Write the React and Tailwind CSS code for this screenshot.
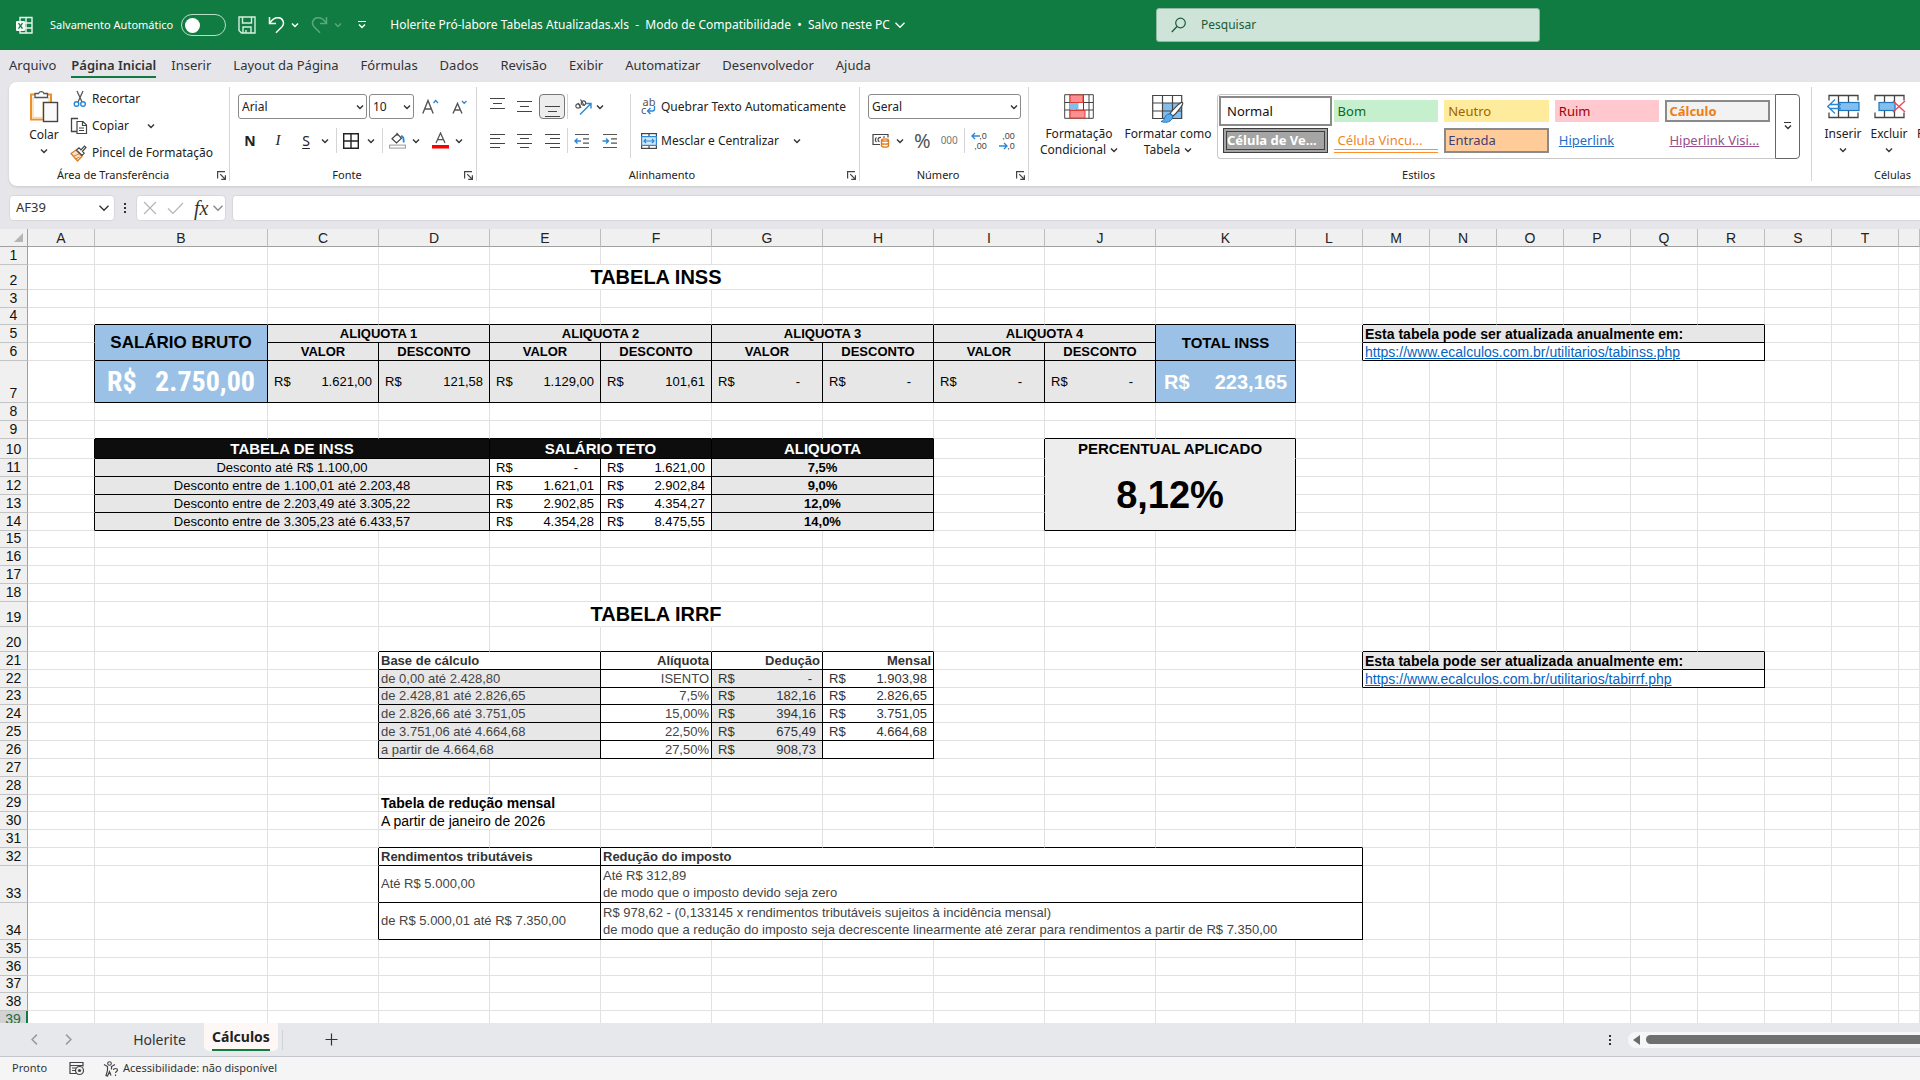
import { useState } from 'react';
import clsx from 'clsx';

const MENU_TABS = [
  'Arquivo',
  'Página Inicial',
  'Inserir',
  'Layout da Página',
  'Fórmulas',
  'Dados',
  'Revisão',
  'Exibir',
  'Automatizar',
  'Desenvolvedor',
  'Ajuda',
];

const COLUMNS = [
  { id: 'A', width: 'w-[67px]' },
  { id: 'B', width: 'w-[173px]' },
  { id: 'C', width: 'w-[111px]' },
  { id: 'D', width: 'w-[111px]' },
  { id: 'E', width: 'w-[111px]' },
  { id: 'F', width: 'w-[111px]' },
  { id: 'G', width: 'w-[111px]' },
  { id: 'H', width: 'w-[111px]' },
  { id: 'I', width: 'w-[111px]' },
  { id: 'J', width: 'w-[111px]' },
  { id: 'K', width: 'w-[140px]' },
  { id: 'L', width: 'w-[67px]' },
  { id: 'M', width: 'w-[67px]' },
  { id: 'N', width: 'w-[67px]' },
  { id: 'O', width: 'w-[67px]' },
  { id: 'P', width: 'w-[67px]' },
  { id: 'Q', width: 'w-[67px]' },
  { id: 'R', width: 'w-[67px]' },
  { id: 'S', width: 'w-[67px]' },
  { id: 'T', width: 'w-[67px]' },
  { id: '', width: '' },
];

const ROW_COUNT = 39;
const ACTIVE_ROW = 39;

// rows that differ from the default 18px height
const ROW_HEIGHTS = {
  2: 'h-[25px]',
  4: 'h-[17px]',
  7: 'h-[42px]',
  10: 'h-[20px]',
  15: 'h-[17px]',
  19: 'h-[25px]',
  20: 'h-[25px]',
  23: 'h-[17px]',
  29: 'h-[17px]',
  33: 'h-[37px]',
  34: 'h-[37px]',
  37: 'h-[17px]',
};

const GRAY = 'bg-[#e7e7e7]';
const BLUE = 'bg-[#9bc2e6]';
const BLACK = 'bg-[#0d0d0d] text-white font-bold text-[15px] text-center';
const HEAD = `${GRAY} font-bold text-center`;
const TITLE = 'text-[20px] leading-6 font-bold';

const money = (value, style = GRAY, dash = 'mr-4') => ({ money: value, style, dash });

// cell address -> content; w/h are merged columns/rows
const CELLS = {
  F2: { text: 'TABELA INSS', style: TITLE, overflow: true, center: true },

  B5: { text: 'SALÁRIO BRUTO', h: 2, box: true, style: `${BLUE} text-[17px] font-bold text-center` },
  C5: { text: 'ALIQUOTA 1', w: 2, box: true, style: HEAD },
  E5: { text: 'ALIQUOTA 2', w: 2, box: true, style: HEAD },
  G5: { text: 'ALIQUOTA 3', w: 2, box: true, style: HEAD },
  I5: { text: 'ALIQUOTA 4', w: 2, box: true, style: HEAD },
  K5: { text: 'TOTAL INSS', h: 2, box: true, style: `${BLUE} text-[15px] font-bold text-center` },
  C6: { text: 'VALOR', box: true, style: HEAD },
  D6: { text: 'DESCONTO', box: true, style: HEAD },
  E6: { text: 'VALOR', box: true, style: HEAD },
  F6: { text: 'DESCONTO', box: true, style: HEAD },
  G6: { text: 'VALOR', box: true, style: HEAD },
  H6: { text: 'DESCONTO', box: true, style: HEAD },
  I6: { text: 'VALOR', box: true, style: HEAD },
  J6: { text: 'DESCONTO', box: true, style: HEAD },
  B7: {
    money: '2.750,00',
    pad: 'px-3',
    style: `${BLUE} text-white font-bold text-[28px] leading-9 font-['Liberation_Sans_Narrow','Roboto_Condensed',sans-serif]`,
  },
  C7: money('1.621,00'),
  D7: money('121,58'),
  E7: money('1.129,00'),
  F7: money('101,61'),
  G7: money('-'),
  H7: money('-'),
  I7: money('-'),
  J7: money('-'),
  K7: { money: '223,165', pad: 'px-2', style: `${BLUE} text-white font-bold text-[20px] leading-6` },

  B10: { text: 'TABELA DE INSS', w: 3, box: true, style: BLACK },
  E10: { text: 'SALÁRIO TETO', w: 2, box: true, style: BLACK },
  G10: { text: 'ALIQUOTA', w: 2, box: true, style: BLACK },
  B11: { text: 'Desconto até R$ 1.100,00', w: 3, box: true, style: `${GRAY} text-center` },
  B12: { text: 'Desconto entre de 1.100,01 até 2.203,48', w: 3, box: true, style: `${GRAY} text-center` },
  B13: { text: 'Desconto entre de 2.203,49 até 3.305,22', w: 3, box: true, style: `${GRAY} text-center` },
  B14: { text: 'Desconto entre de 3.305,23 até 6.433,57', w: 3, box: true, style: `${GRAY} text-center` },
  E11: money('-', ''),
  E12: money('1.621,01', ''),
  E13: money('2.902,85', ''),
  E14: money('4.354,28', ''),
  F11: money('1.621,00', ''),
  F12: money('2.902,84', ''),
  F13: money('4.354,27', ''),
  F14: money('8.475,55', ''),
  G11: { text: '7,5%', w: 2, box: true, style: HEAD },
  G12: { text: '9,0%', w: 2, box: true, style: HEAD },
  G13: { text: '12,0%', w: 2, box: true, style: HEAD },
  G14: { text: '14,0%', w: 2, box: true, style: HEAD },
  J10: { text: 'PERCENTUAL APLICADO', w: 2, box: true, open: true, style: 'bg-[#ededed] text-[15px] font-bold text-center' },
  J11: { text: '8,12%', w: 2, h: 4, box: true, style: 'bg-[#ededed] text-[38px] leading-10 font-bold text-center' },

  F19: { text: 'TABELA IRRF', style: TITLE, overflow: true, center: true },
  D21: { text: 'Base de cálculo', w: 2, box: true, style: 'font-bold text-[#333]' },
  F21: { text: 'Alíquota', box: true, style: 'font-bold text-[#333] text-right' },
  G21: { text: 'Dedução', box: true, style: 'font-bold text-[#333] text-right' },
  H21: { text: 'Mensal', box: true, style: 'font-bold text-[#333] text-right' },
  D29: { text: 'Tabela de redução mensal', overflow: true, style: 'font-bold text-[14px]' },
  D30: { text: 'A partir de janeiro de 2026', overflow: true, style: 'text-[14px]' },
  D32: { text: 'Rendimentos tributáveis', w: 2, box: true, style: 'font-bold text-[#333]' },
  F32: { text: 'Redução do imposto', w: 7, box: true, style: 'font-bold text-[#333]' },
  D33: { text: 'Até R$ 5.000,00', w: 2, box: true, style: 'text-[#444]' },
  F33: {
    text: 'Até R$ 312,89\nde modo que o imposto devido seja zero',
    w: 7,
    box: true,
    style: 'text-[#444] leading-[17px]',
  },
  D34: { text: 'de R$ 5.000,01 até R$ 7.350,00', w: 2, box: true, style: 'text-[#444]' },
  F34: {
    text: 'R$ 978,62 - (0,133145 x rendimentos tributáveis sujeitos à incidência mensal)\nde modo que a redução do imposto seja decrescente linearmente até zerar para rendimentos a partir de R$ 7.350,00',
    w: 7,
    box: true,
    style: 'text-[#444] leading-[17px]',
  },

  M5: { text: 'Esta tabela pode ser atualizada anualmente em:', w: 6, box: true, style: `${GRAY} font-bold text-[14px]` },
  M6: { link: 'https://www.ecalculos.com.br/utilitarios/tabinss.php', w: 6, box: true, style: 'text-[14px]' },
  M21: { text: 'Esta tabela pode ser atualizada anualmente em:', w: 6, box: true, style: `${GRAY} font-bold text-[14px]` },
  M22: { link: 'https://www.ecalculos.com.br/utilitarios/tabirrf.php', w: 6, box: true, style: 'text-[14px]' },
};

const IRRF = [
  ['de 0,00 até 2.428,80', 'ISENTO', '-', '1.903,98'],
  ['de 2.428,81 até 2.826,65', '7,5%', '182,16', '2.826,65'],
  ['de 2.826,66 até 3.751,05', '15,00%', '394,16', '3.751,05'],
  ['de 3.751,06 até 4.664,68', '22,50%', '675,49', '4.664,68'],
  ['a partir de 4.664,68', '27,50%', '908,73', null],
];

IRRF.forEach(([base, rate, deduction, monthly], i) => {
  const row = 22 + i;
  CELLS[`D${row}`] = { text: base, w: 2, box: true, style: `${GRAY} text-[#444]` };
  CELLS[`F${row}`] = { text: rate, box: true, style: 'text-right text-[#444]' };
  CELLS[`G${row}`] = money(deduction, `${GRAY} text-[#333]`, 'mr-1');
  CELLS[`H${row}`] = monthly ? money(monthly, 'text-[#333]') : { text: '', box: true };
});

// Every grid position that a cell covers, so neighbours know which lines to darken
const COVER = {};
Object.entries(CELLS).forEach(([address, cell]) => {
  const col = COLUMNS.findIndex((c) => c.id === address[0]);
  const row = Number(address.slice(1));
  for (let r = row; r < row + (cell.h || 1); r++) {
    for (let c = col; c < col + (cell.w || 1); c++) {
      COVER[`${c}:${r}`] = { address, boxed: Boolean(cell.box || cell.money), center: cell.center };
    }
  }
});

const isBoxed = (col, row) => Boolean(COVER[`${col}:${row}`]?.boxed);

/* ---------- small icons ---------- */

function Svg({ w = 16, h = 16, children, className }) {
  return (
    <svg width={w} height={h} viewBox={`0 0 ${w} ${h}`} fill="none" className={clsx('shrink-0', className)} aria-hidden="true">
      {children}
    </svg>
  );
}

function Chevron({ size = 8, className = 'text-[#333]' }) {
  return (
    <svg width={size} height={size} viewBox="0 0 8 8" fill="none" className={clsx('shrink-0', className)} aria-hidden="true">
      <path d="M1 2.5 4 5.5 7 2.5" stroke="currentColor" strokeWidth={size > 8 ? 0.9 : 1.4} />
    </svg>
  );
}

function ExcelIcon() {
  return (
    <Svg w={18} h={20}>
      <path d="M4 6V2.5h12V18H4v-3M10 2.5V18M4 8h12M9 13h7" stroke="#e9f7ef" strokeWidth="1.4" />
      <rect x="0" y="6" width="9" height="10" rx="1" fill="#f2fbf6" />
      <path d="m2.5 8.2 4 5.4m0-5.4-4 5.4" stroke="#107c41" strokeWidth="1.3" />
    </Svg>
  );
}

function SaveIcon() {
  return (
    <Svg w={18} h={18}>
      <path d="M1 1h16v16H3.5L1 14.5zM4.5 1v6h9V1M5 17v-6h8v6M8 14v3" stroke="#d5f0e0" strokeWidth="1.4" />
    </Svg>
  );
}

function UndoIcon({ className }) {
  return (
    <Svg w={17} h={18} className={className}>
      <path d="M1.500 1v6.500H8M1.800 7.200C4 3.500 7 1.500 10.500 1.800c4.500.4 6.500 5.500 3.500 9L8 16.800" stroke="currentColor" strokeWidth="1.5" />
    </Svg>
  );
}

function PasteIcon() {
  return (
    <Svg w={30} h={33}>
      <path d="M7.500 4.500H2v25h12" stroke="#e8912d" strokeWidth="2" />
      <path d="M17 4.500h5v8" stroke="#e8912d" strokeWidth="2" />
      <path d="M4 7v20.500h10V12.500h6V7" stroke="#fbdca8" strokeWidth="1.5" />
      <path d="M6 7.500v-4h3.500a3 3 0 0 1 5.500 0h3.500v4z" fill="#fff" stroke="#555" strokeWidth="1.3" />
      <rect x="14.5" y="12.5" width="14" height="19" fill="#fafafa" stroke="#444" strokeWidth="1.4" />
    </Svg>
  );
}

function ScissorsIcon() {
  return (
    <Svg w={16} h={18}>
      <path d="M5 1l5 11M11 1 6 12" stroke="#555" strokeWidth="1.3" />
      <circle cx="4.500" cy="14" r="2.300" stroke="#2b88d8" strokeWidth="1.4" />
      <circle cx="11" cy="14" r="2.300" stroke="#2b88d8" strokeWidth="1.4" />
    </Svg>
  );
}

function CopyIcon() {
  return (
    <Svg w={18} h={18}>
      <path d="M7 14.500H1.500V1.500H8" stroke="#444" strokeWidth="1.3" />
      <path d="M7 4.500h6l3.500 3.500v8.500H7zM12.500 4.500V8.500h4M9 11h5M9 13.500h5" stroke="#444" strokeWidth="1.2" />
    </Svg>
  );
}

function BrushIcon() {
  return (
    <Svg w={18} h={17}>
      <path d="M1 8.500 6 5l6 6.500L7.500 16z" fill="#fce1c4" stroke="#d9822b" strokeWidth="1.3" />
      <path d="M3 11.500l6-2.500M5.500 14l4-2" stroke="#d9822b" strokeWidth="1" />
      <path d="M6.500 5 9 2.800l2 2L14.500 1 16 2.500l-3.500 3.800 1.700 2L12 10.500z" fill="#fff" stroke="#444" strokeWidth="1.2" />
    </Svg>
  );
}

function LauncherIcon() {
  return (
    <Svg w={9} h={9}>
      <path d="M.6 7.500V.6H8M3.200 3.200 8 8M8.400 4.200v4.200H4.200" stroke="#444" strokeWidth="1.2" />
    </Svg>
  );
}

function BordersIcon() {
  return (
    <Svg>
      <path d="M.7.7h14.600v14.600H.7zM8 .7v14.600M.7 8h14.600" stroke="#222" strokeWidth="1.4" />
    </Svg>
  );
}

function FillIcon() {
  return (
    <Svg w={17} h={17}>
      <path d="M8 .8v3M3 6.800 8.300 1.800 12.500 6.300 7.500 11z" stroke="#444" strokeWidth="1.2" />
      <path d="M12 4c2.500.5 3 3 2.500 6.500" stroke="#2b88d8" strokeWidth="1.8" />
      <rect x=".6" y="13.100" width="15.800" height="3" fill="#fff" stroke="#999" />
    </Svg>
  );
}

function FontColorIcon() {
  return (
    <Svg w={17} h={17}>
      <path d="M4 11 8.500 1 13 11M5.500 7.700h6" stroke="#555" strokeWidth="1.3" />
      <path d="M0 13h17v3.500H0z" fill="#f00" />
    </Svg>
  );
}

function GrowFontIcon({ small }) {
  return (
    <Svg w={17} h={16}>
      <path
        d={small ? 'M2 14.500 6.500 4.500 11 14.500M3.800 11h5.400' : 'M.8 14.500 6 1.500 11.200 14.500M2.800 10h6.400'}
        stroke="#555"
        strokeWidth="1.4"
      />
      <path d={small ? 'M11 2l2.200 2.300L15.500 2' : 'M11.500 4l2.200-2.500L16 4'} stroke="#2b88d8" strokeWidth="1.3" />
    </Svg>
  );
}

// lines: list of [x1, x2, y]
function LinesIcon({ lines, h = 16 }) {
  return (
    <Svg w={15} h={h}>
      {lines.map(([x1, x2, y]) => (
        <path key={y} d={`M${x1} ${y}.5H${x2}`} stroke="#444" strokeWidth="1.2" />
      ))}
    </Svg>
  );
}

function IndentIcon({ out }) {
  return (
    <Svg>
      <path d="M1 1.500h14M9 5.800h6M9 10.200h6M1 14.500h14" stroke="#555" strokeWidth="1.2" />
      <path d={out ? 'M7 8H1m2.500-2.500L1 8l2.500 2.500' : 'M.5 8h6M4 5.500 6.500 8 4 10.500'} stroke="#2b88d8" strokeWidth="1.4" />
    </Svg>
  );
}

function OrientationIcon() {
  return (
    <Svg w={18} h={18}>
      <circle cx="4" cy="8" r="2.200" stroke="#555" strokeWidth="1.2" />
      <path d="M4 5l3 5M6.500 1.500l4 6.500" stroke="#555" strokeWidth="1.2" />
      <circle cx="9.500" cy="5" r="2.200" stroke="#555" strokeWidth="1.2" />
      <path d="M6 16.500 16.500 6M12 5.500h5V10.500" stroke="#2b88d8" strokeWidth="1.4" />
    </Svg>
  );
}

function WrapIcon() {
  return (
    <span className="relative flex w-4 shrink-0 flex-col text-[11px] leading-2 text-[#555]">
      <span>ab</span>
      <span className="flex">
        c
        <Svg w={10} h={10}>
          <path d="M8.500 0v3a2 2 0 0 1-2 2H1.500M4.500 2 1.500 5l3 3" stroke="#2b88d8" strokeWidth="1.4" />
        </Svg>
      </span>
    </span>
  );
}

function MergeIcon() {
  return (
    <Svg>
      <rect x=".6" y=".6" width="14.800" height="14.800" stroke="#444" strokeWidth="1.2" />
      <path d="M8 .6v3M8 12.500v3" stroke="#444" strokeWidth="1.2" />
      <rect x=".6" y="3.600" width="14.800" height="8.800" fill="#cfe6f8" stroke="#2b88d8" strokeWidth="1.2" />
      <path d="M3 8h10M5 6 3 8l2 2M11 6l2 2-2 2" stroke="#2b88d8" strokeWidth="1.2" />
    </Svg>
  );
}

function CurrencyIcon() {
  return (
    <Svg w={18} h={15}>
      <path d="M8 11.500H1V1.500h15v3M4.500 4.500c-1.500 1-1.500 3.500 0 4.500M9 4.500c-2-.5-3 1-3 2s.5 2 1.500 2.200M11 4h2" stroke="#444" strokeWidth="1.2" />
      <path
        d="M9.500 7c0-1.500 7-1.500 7 0v6c0 1.500-7 1.500-7 0zM9.500 7c0 1.500 7 1.500 7 0M9.500 10c0 1.500 7 1.500 7 0"
        fill="#fff"
        stroke="#e07a1f"
        strokeWidth="1.4"
      />
    </Svg>
  );
}

function DecimalIcon({ decrease }) {
  return (
    <span className="relative flex w-4 shrink-0 flex-col items-end font-['Liberation_Sans',sans-serif] text-[9px] leading-[10px] text-[#444]">
      <span>{decrease ? ',00' : ',0'}</span>
      <span>{decrease ? ',0' : ',00'}</span>
      <svg
        width="9"
        height="8"
        viewBox="0 0 9 8"
        fill="none"
        className={clsx('absolute left-0', decrease ? 'bottom-px' : 'top-px')}
        aria-hidden="true"
      >
        <path d={decrease ? 'M0 4h8M5 1l3 3-3 3' : 'M9 4H1M4 1 1 4l3 3'} stroke="#2b88d8" strokeWidth="1.4" />
      </svg>
    </span>
  );
}

function ConditionalIcon() {
  return (
    <Svg w={30} h={25}>
      <path d="M.7.7h28.600v23.600H.7zM6 .7v23.600M12.500.7v23.600M19.500.7v23.600M25 .7v23.600M.7 8.500h28.600M.7 16h28.600" stroke="#444" />
      <rect x="6" y="1" width="13" height="7.500" fill="#ff8f8f" stroke="#e03c31" />
      <rect x="6" y="9" width="8.500" height="6.500" fill="#83beec" />
      <rect x="6" y="16.500" width="15" height="7.500" fill="#ff8f8f" stroke="#e03c31" />
    </Svg>
  );
}

function TableFormatIcon() {
  return (
    <Svg w={33} h={30}>
      <rect x="11" y="9" width="19" height="15" fill="#83beec" />
      <path d="M.7 1.500h29v23h-29zM10.500 1.500v23M20.500 1.500v23M.7 9h29M.7 17h29" stroke="#444" strokeWidth="1.2" />
      <path d="M30.500 8.500c2 1-6 11-9.500 13.500l-3-2.500C20.500 16 28.500 7.500 30.500 8.500z" fill="#fff" stroke="#444" strokeWidth="1.2" />
      <path d="M17 20c3 0 4.500 2.500 3 5-2 3.500-7 4-11 2.500 3-1 3-2.500 4-4.500.8-1.800 2-3 4-3z" fill="#5ea9e6" stroke="#1e78c2" />
    </Svg>
  );
}

function CellsIcon({ remove }) {
  return (
    <Svg w={33} h={25}>
      <path d="M2 6.500V1.500h29v5M2 18.500v5h29v-5M11.500 1.500v22M21.500 1.500v22" stroke="#444" strokeWidth="1.3" />
      <rect x={remove ? 6 : 12} y="8.500" width={remove ? 16 : 20} height="8" fill="#83beec" stroke="#1e78c2" strokeWidth="1.2" />
      {remove ? (
        <path d="m20 7 12 11M32 7 20 18" stroke="#e8505b" strokeWidth="1.5" />
      ) : (
        <path d="M14 10.500H3M14 14.500H3M8 5.500.8 12.500 8 19.500" stroke="#2b88d8" strokeWidth="1.3" />
      )}
    </Svg>
  );
}

/* ---------- ribbon ---------- */

function IconButton({ label, className, children }) {
  return (
    <button type="button" aria-label={label} className={clsx('flex h-[25px] shrink-0 items-center justify-center', className)}>
      {children}
    </button>
  );
}

function RibbonGroup({ label, className, launcher, children }) {
  return (
    <section className={clsx('flex shrink-0 flex-col border-r border-[#d5d5d8]', className)}>
      <div className="flex-1">{children}</div>
      <div className="flex h-3 items-center pr-[3px] text-[11px]">
        <span className="flex-1 text-center">{label}</span>
        {launcher && (
          <button type="button" aria-label={`Opções de ${label}`}>
            <LauncherIcon />
          </button>
        )}
      </div>
    </section>
  );
}

function Select({ label, options, className }) {
  return (
    <div className={clsx('relative flex h-[25px] items-center', className)}>
      <select
        aria-label={label}
        className="h-full w-full appearance-none rounded-[3px] border border-[#8a8a8a] bg-white px-[3px] text-[#222] outline-none"
      >
        {options.map((option) => (
          <option key={option}>{option}</option>
        ))}
      </select>
      <Chevron className="pointer-events-none absolute right-[3px] text-[#333]" />
    </div>
  );
}

function Divider({ className }) {
  return <span className={clsx('w-px shrink-0 bg-[#d5d5d8]', className)} />;
}

function BigButton({ icon, lines, className }) {
  return (
    <button type="button" className={clsx('flex flex-col items-center', className)}>
      <span className="flex h-8 items-start">{icon}</span>
      <span className="leading-4">{lines[0]}</span>
      <span className="flex h-4 items-center gap-1 leading-4">
        {lines[1]}
        <Chevron />
      </span>
    </button>
  );
}

const STYLES = [
  { text: 'Normal', style: 'px-1 bg-white text-[#111] outline-2 outline-offset-2 outline-[#8a8a8a]' },
  { text: 'Bom', style: 'px-1 bg-[#c6efce] text-[#0b6b14]' },
  { text: 'Neutro', style: 'px-1 bg-[#ffeb9c] text-[#9c6500]' },
  { text: 'Ruim', style: 'px-1 bg-[#ffc7ce] text-[#9c0006]' },
  { text: 'Cálculo', style: 'px-0.5 border-2 border-[#8a8a8a] bg-[#f2f2f2] font-bold text-[#f07d13]' },
  { text: 'Célula de Ve...', style: 'border-4 border-double border-[#3f3f3f] bg-[#a5a5a5] font-bold text-white' },
  { text: 'Célula Vincu...', style: 'px-1 border-y-4 border-double border-t-transparent border-b-[#ff8f2b] text-[#f0861f]' },
  { text: 'Entrada', style: 'px-0.5 border-2 border-[#8a8a8a] bg-[#ffcc99] text-[#3f3f76]' },
  { text: 'Hiperlink', style: 'px-1 text-[#1f6fc4] underline' },
  { text: 'Hiperlink Visi...', style: 'px-1 text-[#954f8c] underline' },
];

function StyleGallery() {
  return (
    <div className="flex h-[65px]">
      <div className="grid w-[558px] grid-cols-5 gap-1.5 rounded-l-[4px] border border-r-0 border-[#c8c8c8] py-[5px] pr-[5px] pl-[5px]">
        {STYLES.map(({ text, style }) => (
          <button
            key={text}
            type="button"
            className={clsx('flex items-center overflow-hidden text-left text-[13px] leading-4 whitespace-nowrap', style)}
          >
            {text}
          </button>
        ))}
      </div>
      <button
        type="button"
        aria-label="Mais estilos"
        className="flex w-[25px] flex-col items-center justify-center rounded-r-[4px] border border-[#666]"
      >
        <span className="h-px w-[7px] bg-[#333]" />
        <Chevron />
      </button>
    </div>
  );
}

function Ribbon() {
  return (
    <div className="ml-[9px] flex h-[104px] overflow-hidden rounded-l-lg bg-white py-[5px] text-[12px] text-[#222] shadow-sm">
      <RibbonGroup label="Área de Transferência" launcher className="w-[221px]">
        <div className="flex gap-[11px] pt-[3px] pl-5">
          <button type="button" className="flex flex-col items-center">
            <PasteIcon />
            <span className="pt-1 leading-4">Colar</span>
            <Chevron className="mt-1 text-[#333]" />
          </button>
          <div className="flex flex-col gap-[11px] pt-px">
            <button type="button" className="flex h-4 items-center gap-1 pl-0.5">
              <ScissorsIcon />
              Recortar
            </button>
            <button type="button" className="flex h-4 items-center gap-1">
              <CopyIcon />
              Copiar
              <Chevron className="ml-3.5 text-[#333]" />
            </button>
            <button type="button" className="flex h-4 items-center gap-1">
              <BrushIcon />
              Pincel de Formatação
            </button>
          </div>
        </div>
      </RibbonGroup>

      <RibbonGroup label="Fonte" launcher className="w-[247px]">
        <div className="flex flex-col gap-[9px] pt-[7px] pl-2">
          <div className="flex gap-[2px]">
            <Select label="Fonte" options={['Arial', 'Calibri', 'Verdana']} className="w-[129px]" />
            <Select label="Tamanho da fonte" options={['10', '11', '12']} className="w-[45px]" />
            <IconButton label="Aumentar fonte" className="ml-1.5">
              <GrowFontIcon />
            </IconButton>
            <IconButton label="Diminuir fonte" className="ml-2.5">
              <GrowFontIcon small />
            </IconButton>
          </div>
          <div className="flex items-center">
            <IconButton label="Negrito" className="w-6 text-[14px] font-bold">N</IconButton>
            <IconButton label="Itálico" className="ml-1 w-6 font-['Liberation_Serif',serif] text-[15px] italic">I</IconButton>
            <IconButton label="Sublinhado" className="ml-1 w-6 text-[14px] underline underline-offset-2">S</IconButton>
            <Chevron className="ml-[3px] text-[#333]" />
            <Divider className="ml-[7px] h-[25px]" />
            <IconButton label="Bordas" className="ml-1.5">
              <BordersIcon />
            </IconButton>
            <Chevron className="ml-2 text-[#333]" />
            <Divider className="ml-[7px] h-[25px]" />
            <IconButton label="Cor de preenchimento" className="ml-1.5">
              <FillIcon />
            </IconButton>
            <Chevron className="ml-1.5 text-[#333]" />
            <IconButton label="Cor da fonte" className="ml-3">
              <FontColorIcon />
            </IconButton>
            <Chevron className="ml-1.5 text-[#333]" />
          </div>
        </div>
      </RibbonGroup>

      <RibbonGroup label="Alinhamento" launcher className="w-[383px]">
        <div className="flex pt-[7px] pl-2">
          <div className="flex flex-col gap-[9px]">
            <div className="flex items-center">
              <IconButton label="Alinhar acima" className="w-[25px]">
                <LinesIcon lines={[[0, 15, 1], [3, 12, 6], [0, 15, 11]]} h={20} />
              </IconButton>
              <IconButton label="Alinhar no meio" className="ml-0.5 w-[25px]">
                <LinesIcon lines={[[0, 15, 2], [3, 12, 7], [0, 15, 12]]} />
              </IconButton>
              <IconButton label="Alinhar embaixo" className="ml-0.5 w-[26px] rounded-[4px] border border-[#777] bg-[#ededed]">
                <LinesIcon lines={[[0, 15, 9], [3, 12, 14], [0, 15, 19]]} h={20} />
              </IconButton>
              <Divider className="ml-0.5 h-[25px]" />
              <IconButton label="Orientação" className="ml-1.5">
                <OrientationIcon />
              </IconButton>
              <Chevron className="ml-1 text-[#333]" />
            </div>
            <div className="flex items-center">
              <IconButton label="Alinhar à esquerda" className="w-[25px]">
                <LinesIcon lines={[[0, 15, 1], [0, 10, 5], [0, 15, 10], [0, 10, 14]]} />
              </IconButton>
              <IconButton label="Centralizar" className="ml-0.5 w-[25px]">
                <LinesIcon lines={[[0, 15, 1], [3, 12, 5], [0, 15, 10], [3, 12, 14]]} />
              </IconButton>
              <IconButton label="Alinhar à direita" className="ml-0.5 w-[26px]">
                <LinesIcon lines={[[0, 15, 1], [5, 15, 5], [0, 15, 10], [5, 15, 14]]} />
              </IconButton>
              <Divider className="ml-0.5 h-[25px]" />
              <IconButton label="Diminuir recuo" className="ml-1.5">
                <IndentIcon out />
              </IconButton>
              <IconButton label="Aumentar recuo" className="ml-3">
                <IndentIcon />
              </IconButton>
            </div>
          </div>
          <Divider className="ml-3 h-16" />
          <div className="flex flex-col gap-[9px] pl-2.5">
            <button type="button" className="flex h-[25px] items-center gap-1 whitespace-nowrap">
              <WrapIcon />
              Quebrar Texto Automaticamente
            </button>
            <button type="button" className="flex h-[25px] items-center gap-1 whitespace-nowrap">
              <MergeIcon />
              Mesclar e Centralizar
              <Chevron className="ml-2.5 text-[#333]" />
            </button>
          </div>
        </div>
      </RibbonGroup>

      <RibbonGroup label="Número" launcher className="w-[169px]">
        <div className="flex flex-col gap-[9px] pt-[7px] pl-2">
          <Select label="Formato de número" options={['Geral', 'Número', 'Moeda']} className="w-[153px]" />
          <div className="flex items-center">
            <IconButton label="Formato de contabilização" className="ml-1">
              <CurrencyIcon />
            </IconButton>
            <Chevron className="ml-1.5 text-[#333]" />
            <IconButton label="Porcentagem" className="ml-2.5 text-[20px] text-[#555]">%</IconButton>
            <IconButton label="Separador de milhares" className="ml-2.5 text-[10px] text-[#777]">000</IconButton>
            <Divider className="ml-1.5 h-[25px]" />
            <IconButton label="Aumentar casas decimais" className="ml-1.5">
              <DecimalIcon />
            </IconButton>
            <IconButton label="Diminuir casas decimais" className="ml-3">
              <DecimalIcon decrease />
            </IconButton>
          </div>
        </div>
      </RibbonGroup>

      <RibbonGroup label="Estilos" className="w-[783px]">
        <div className="flex pt-[7px] pl-2.5">
          <BigButton icon={<ConditionalIcon />} lines={['Formatação', 'Condicional']} className="w-20" />
          <BigButton icon={<TableFormatIcon />} lines={['Formatar como', 'Tabela']} className="w-[98px]" />
          <StyleGallery />
        </div>
      </RibbonGroup>

      <RibbonGroup label="Células" className="w-[165px]">
        <div className="flex gap-2.5 pt-[7px] pl-[13px]">
          <BigButton icon={<CellsIcon />} lines={['Inserir', '']} className="w-9" />
          <BigButton icon={<CellsIcon remove />} lines={['Excluir', '']} className="w-9" />
          <BigButton icon={null} lines={['Formatar', '']} />
        </div>
      </RibbonGroup>
    </div>
  );
}

function TitleBar() {
  const [autoSave, setAutoSave] = useState(false);

  return (
    <header className="grid h-[50px] shrink-0 grid-cols-[3fr_1fr_1fr] items-center bg-[#107c41] text-[12px] text-white">
      <div className="flex items-center whitespace-nowrap">
        <span className="pl-4">
          <ExcelIcon />
        </span>
        <label className="ml-4 flex items-center gap-2 text-[11px]">
          Salvamento Automático
          <input
            type="checkbox"
            role="switch"
            checked={autoSave}
            onChange={() => setAutoSave(!autoSave)}
            className="peer sr-only"
          />
          <span className="flex h-[22px] w-[45px] items-center rounded-full border border-[#b5e0c6] px-[3px] peer-checked:justify-end">
            <span className="size-[15px] rounded-full bg-white" />
          </span>
        </label>
        <button type="button" aria-label="Salvar" className="ml-3">
          <SaveIcon />
        </button>
        <button type="button" aria-label="Desfazer" className="ml-3 flex items-center gap-1.5">
          <UndoIcon />
          <Chevron className="text-white" />
        </button>
        <button type="button" aria-label="Refazer" className="ml-3 flex items-center gap-1.5 text-[#5aa97c]">
          <UndoIcon className="-scale-x-100" />
          <Chevron className="text-[#5aa97c]" />
        </button>
        <button type="button" aria-label="Personalizar barra" className="ml-4 flex flex-col items-center">
          <span className="h-px w-2 bg-white" />
          <Chevron className="text-white" />
        </button>
        <button type="button" className="ml-6 flex items-center gap-1">
          <span className="whitespace-pre">Holerite Pró-labore Tabelas Atualizadas.xls  -  Modo de Compatibilidade  •  Salvo neste PC</span>
          <Chevron size={12} className="text-white" />
        </button>
      </div>
      <label className="-mr-1 ml-1 flex h-[34px] items-center gap-3.5 rounded-[3px] border border-[#8fb9a0] bg-[#cfe4d8] pl-3.5 text-[#185c37]">
        <Svg>
          <circle cx="9.500" cy="6" r="4.800" stroke="#185c37" strokeWidth="1.2" />
          <path d="M6 9.500.8 15" stroke="#185c37" strokeWidth="1.3" />
        </Svg>
        <input
          type="search"
          aria-label="Pesquisar"
          placeholder="Pesquisar"
          className="w-full bg-transparent outline-none placeholder:text-[#185c37]"
        />
      </label>
    </header>
  );
}

function MenuTabs() {
  return (
    <nav className="flex h-8 gap-[22px] px-[9px] text-[13px] text-[#333]">
      {MENU_TABS.map((tab) => {
        const active = tab === 'Página Inicial';
        return (
          <button
            key={tab}
            type="button"
            className={clsx('h-7 border-b-2 pt-1.5', active ? '-mx-[7px] border-[#107c41] font-semibold' : 'border-transparent')}
          >
            {tab}
          </button>
        );
      })}
    </nav>
  );
}

function FormulaBar() {
  return (
    <div className="flex h-[43px] items-center py-[9px] pl-[9px]">
      <div className="flex h-[26px] w-[106px] items-center rounded-[4px] border border-[#d8d8dc] bg-white pr-1 pl-1.5">
        <input aria-label="Caixa de nome" defaultValue="AF39" className="w-full min-w-0 text-[13px] text-[#333] outline-none" />
        <Chevron size={12} />
      </div>
      <span className="mx-[9px] flex w-[3px] flex-col gap-[2px]">
        <i className="size-[2px] bg-[#333]" />
        <i className="size-[2px] bg-[#333]" />
        <i className="size-[2px] bg-[#333]" />
      </span>
      <div className="flex h-[26px] w-[90px] items-center rounded-[4px] border border-[#d8d8dc] bg-white pl-1.5">
        <button type="button" aria-label="Cancelar">
          <Svg w={14} h={14}>
            <path d="m1 1 12 12M13 1 1 13" stroke="#b5b5b5" strokeWidth="1.2" />
          </Svg>
        </button>
        <button type="button" aria-label="Inserir" className="ml-2.5">
          <Svg w={17} h={14}>
            <path d="m1 7.500 5 5L16 2" stroke="#b5b5b5" strokeWidth="1.2" />
          </Svg>
        </button>
        <button
          type="button"
          aria-label="Inserir função"
          className="ml-2.5 flex items-center gap-1 font-['Liberation_Serif',serif] text-[20px] leading-5 italic text-[#333]"
        >
          fx
          <Chevron size={12} className="text-[#888]" />
        </button>
      </div>
      <input
        aria-label="Barra de fórmulas"
        className="ml-1.5 h-[26px] flex-1 rounded-l-[4px] border border-r-0 border-[#d8d8dc] bg-white px-2 outline-none"
      />
    </div>
  );
}

/* ---------- sheet ---------- */

function CellContent({ cell }) {
  if (cell.link) {
    return (
      <a href={cell.link} className="text-[#0563c1] underline">
        {cell.link}
      </a>
    );
  }
  if (cell.money) {
    return (
      <div className={clsx('flex justify-between', cell.pad || 'px-1.5')}>
        <span>R$</span>
        <span className={cell.money === '-' ? cell.dash : ''}>{cell.money}</span>
      </div>
    );
  }
  if (cell.center) {
    return <div className="flex justify-center">{cell.text}</div>;
  }
  return cell.text;
}

function SheetCell({ col, row }) {
  const covered = COVER[`${col}:${row}`];
  const address = `${COLUMNS[col].id}${row}`;
  if (covered && covered.address !== address) return null;

  const cell = CELLS[address] || {};
  const lastCol = col + (cell.w || 1) - 1;
  const lastRow = row + (cell.h || 1) - 1;
  const darkRight = isBoxed(col, row) || isBoxed(lastCol + 1, row);
  const darkBottom = isBoxed(col, row) || isBoxed(col, lastRow + 1);
  // text that runs past its cell hides the line it crosses
  const spills = cell.overflow || COVER[`${col + 1}:${row}`]?.center;

  return (
    <td
      colSpan={cell.w}
      rowSpan={cell.h}
      className={clsx(
        'border-r border-b py-0 align-middle whitespace-pre',
        cell.money ? 'px-0' : 'px-0.5',
        darkRight ? 'border-r-black' : spills ? 'border-r-transparent' : 'border-r-[#e1e1e1]',
        cell.open ? 'border-b-[#ededed]' : darkBottom ? 'border-b-black' : 'border-b-[#e1e1e1]',
        cell.style
      )}
    >
      <CellContent cell={cell} />
    </td>
  );
}

function Sheet() {
  const rows = Array.from({ length: ROW_COUNT }, (_, i) => i + 1);

  return (
    <main className="min-h-0 flex-1 overflow-hidden bg-white">
      <table className="w-full table-fixed border-separate border-spacing-0 font-['Liberation_Sans',Arial,sans-serif] text-[13px] leading-[14px] text-black">
        <thead>
          <tr className="h-[18px] bg-[#f0f0f0] text-[14px] text-[#222]">
            <th className="w-7 border-r border-b border-[#a0a0a0] p-0" aria-label="Selecionar tudo">
              <Svg w={9} h={9} className="mr-1 ml-auto">
                <path d="M9 0v9H0z" fill="#b5b5b5" />
              </Svg>
            </th>
            {COLUMNS.map(({ id, width }) => (
              <th
                key={id || 'rest'}
                className={clsx('border-r border-b border-r-[#bdbdbd] border-b-[#a0a0a0] p-0 font-normal', width)}
              >
                {id}
              </th>
            ))}
          </tr>
        </thead>
        <tbody>
          {rows.map((row) => (
            <tr key={row} className={ROW_HEIGHTS[row] || 'h-[18px]'}>
              <th
                className={clsx(
                  'border-b border-b-[#c4c4c4] px-0 pt-0 pb-0.5 align-bottom text-[14px] font-normal',
                  row === ACTIVE_ROW
                    ? 'border-r-2 border-r-[#107c41] bg-[#d2d2d2] text-[#1e6b41]'
                    : 'border-r border-r-[#a0a0a0] bg-[#f0f0f0] text-[#111]'
                )}
              >
                {row}
              </th>
              {COLUMNS.map((_, col) => (
                <SheetCell key={col} col={col} row={row} />
              ))}
            </tr>
          ))}
        </tbody>
      </table>
    </main>
  );
}

function SheetTabs() {
  return (
    <div className="flex h-[34px] shrink-0 items-center border-b border-[#c3c6ca] bg-[#e6e8eb] text-[14px] text-[#333]">
      <button type="button" aria-label="Planilha anterior" className="ml-7">
        <Chevron size={13} className="rotate-90 text-[#9a9a9a]" />
      </button>
      <button type="button" aria-label="Próxima planilha" className="ml-[21px]">
        <Chevron size={13} className="-rotate-90 text-[#9a9a9a]" />
      </button>
      <button type="button" className="mr-2 ml-12 w-[73px] text-center">
        Holerite
      </button>
      <button
        type="button"
        className="flex h-7 w-[74px] items-start justify-center self-start rounded-b-[5px] bg-[#fdf8f6] font-bold text-[#222]"
      >
        <span className="border-b-2 border-[#107c41] pt-0.5 leading-6">Cálculos</span>
      </button>
      <span className="ml-1 h-5 w-px bg-[#cfd2d6]" />
      <button type="button" aria-label="Nova planilha" className="ml-[42px]">
        <Svg w={13} h={13}>
          <path d="M6.500.5v12M.5 6.500h12" stroke="#333" strokeWidth="1.2" />
        </Svg>
      </button>
      <span className="ml-auto flex w-[3px] flex-col gap-[2px]">
        <i className="size-[2px] bg-[#333]" />
        <i className="size-[2px] bg-[#333]" />
        <i className="size-[2px] bg-[#333]" />
      </span>
      <div className="ml-4 flex h-4 w-[292px] items-center gap-1.5 rounded-l-full bg-[#f5f6f8] pl-[5px]">
        <Svg w={7} h={10}>
          <path d="M7 0v10L0 5z" fill="#6b6b6b" />
        </Svg>
        <span className="h-[9px] flex-1 rounded-l-full bg-[#6f6f6f]" />
      </div>
    </div>
  );
}

function StatusBar() {
  return (
    <footer className="flex h-[23px] shrink-0 items-center bg-[#f5f5f5] pl-3 text-[11px] text-[#333]">
      <span>Pronto</span>
      <Svg w={16} h={15} className="ml-[22px]">
        <path d="M7 12.500H1V1.500h13v4M1 4.500h13M3 7h4M3 9.500h3" stroke="#444" strokeWidth="1.2" />
        <circle cx="10.500" cy="9.500" r="4" fill="#f5f5f5" stroke="#444" strokeWidth="1.2" />
        <circle cx="10.500" cy="9.500" r="1.600" fill="#444" />
      </Svg>
      <button type="button" className="ml-[18px] flex items-center gap-1">
        <Svg w={16} h={16}>
          <circle cx="6.500" cy="2.500" r="1.800" stroke="#444" strokeWidth="1.1" />
          <path d="M1 3.500l3.500 2v4L3 14.500l1.500.5 2-4.500 1.500 4M12 3.500l-3.500 2v3" stroke="#444" strokeWidth="1.2" />
          <path d="M10.500 9c0-2 4-2 4 0 0 1.500-2 1.500-2 3M12.500 13.500v1.500" stroke="#444" strokeWidth="1.2" />
        </Svg>
        Acessibilidade: não disponível
      </button>
    </footer>
  );
}

export default function App() {
  return (
    <div className="flex h-screen flex-col overflow-hidden bg-[#e6e6ea] font-['Noto_Sans','Open_Sans',sans-serif]">
      <TitleBar />
      <div className="shrink-0">
        <MenuTabs />
        <Ribbon />
        <FormulaBar />
      </div>
      <Sheet />
      <SheetTabs />
      <StatusBar />
    </div>
  );
}
